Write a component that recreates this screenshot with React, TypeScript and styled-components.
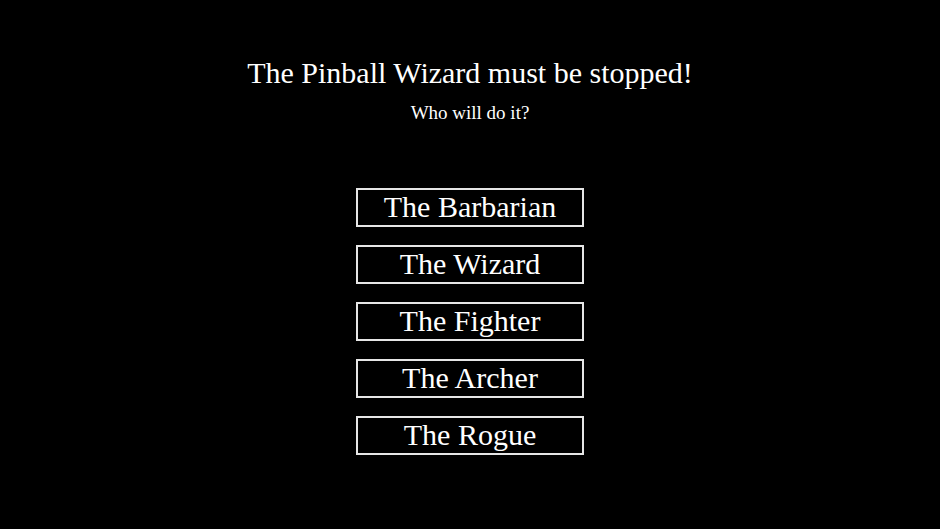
import { createGlobalStyle, styled } from "styled-components";

const GlobalStyle = createGlobalStyle`
  html, body {
    margin: 0;
    padding: 0;
    background: #000;
  }
  body {
    font-family: "Liberation Serif", "Times New Roman", serif;
    color: #fff;
  }
`;

const Main = styled.div`
  width: 940px;
  height: 529px;
  display: flex;
  flex-direction: column;
  align-items: center;
  padding-top: 55px;
  box-sizing: border-box;
`;

const Title = styled.h1`
  margin: 0;
  font-size: 30px;
  font-weight: normal;
  line-height: 36px;
`;

const Subtitle = styled.h4`
  margin: 10px 0 0;
  font-size: 19px;
  font-weight: normal;
  line-height: 24px;
`;

const Choices = styled.div`
  margin-top: 63px;
  display: flex;
  flex-direction: column;
  gap: 18px;
`;

const Choice = styled.button`
  width: 228px;
  height: 39px;
  box-sizing: border-box;
  background: #000;
  color: #fff;
  border: 2px solid #e6e6e6;
  font-family: "Liberation Serif", "Times New Roman", serif;
  font-size: 30px;
  line-height: 33px;
  padding: 0 0 5px;
  cursor: pointer;
`;

const heroes = ["The Barbarian", "The Wizard", "The Fighter", "The Archer", "The Rogue"];

export default function App() {
  return (
    <>
      <GlobalStyle />
      <Main>
        <Title>The Pinball Wizard must be stopped!</Title>
        <Subtitle>Who will do it?</Subtitle>
        <Choices>
          {heroes.map((hero) => (
            <Choice key={hero}>{hero}</Choice>
          ))}
        </Choices>
      </Main>
    </>
  );
}
